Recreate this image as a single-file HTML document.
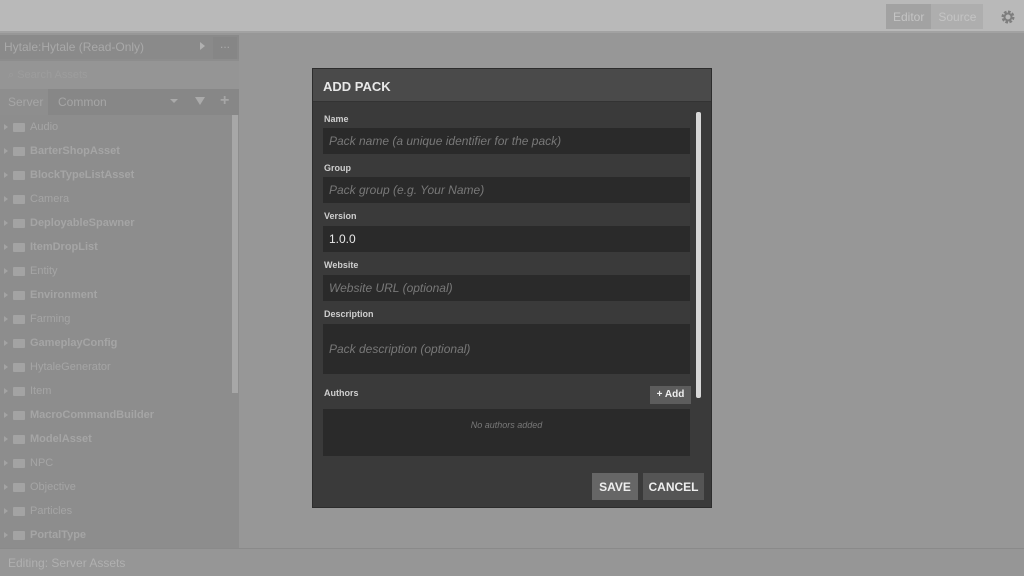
<!DOCTYPE html>
<html><head><style>
*{margin:0;padding:0;box-sizing:border-box}
body{width:1024px;height:576px;overflow:hidden;background:#979797;font-family:"Liberation Sans",sans-serif;position:relative}
.top{position:absolute;left:0;top:0;width:1024px;height:33px;background:#b9b9b9;border-bottom:2px solid #a2a2a2}
.tabs{position:absolute;left:886px;top:4px;height:25px;display:flex;background:#aeaeae}
.tabs div{padding:6px 7px;font-size:12px;color:#c4c4c4}
.tabs div:first-child{background:#a2a2a2}
.side{position:absolute;left:0;top:35px;width:239px;height:513px;background:#8d8d8d}
.hdr{height:24px;background:#8a8a8a;color:#a9a9a9;font-size:12px;padding:5px 4px}
.search{height:28px;background:#959595;margin-top:2px}
.tabrow{height:26px;background:#878787;position:relative;font-size:12px;color:#a6a6a6}
.item{position:absolute;left:0;font-size:11px;color:#a5a5a5;display:flex;align-items:center}
.item b{font-weight:bold}
.fold{display:inline-block;width:12px;height:9px;background:#a3a3a3;margin:0 5px 0 5px;border-radius:1px}
.arr{display:inline-block;width:0;height:0;border-left:4px solid #a3a3a3;border-top:3px solid transparent;border-bottom:3px solid transparent;margin-left:4px}
.bot{position:absolute;left:0;top:548px;width:1024px;height:28px;background:#969696;border-top:1px solid #8a8a8a;font-size:12px;color:#b0b0b0;padding:7px 8px}
.dlg{position:absolute;left:312px;top:68px;width:400px;height:440px;background:#3a3a3a;border:1px solid #2c2c2c}
.dh{height:33px;background:#4a4a4a;color:#e8e8e8;font-weight:bold;font-size:13px;padding:10px 10px;border-bottom:1px solid #333}
.lbl{position:absolute;left:11px;font-size:9px;font-weight:bold;color:#cfcfcf}
.inp{position:absolute;left:10px;width:367px;height:26px;background:#2a2a2a;font-size:12px;font-style:italic;color:#787878;padding:6px 6px}
.btn{position:absolute;background:#5c5c5c;color:#eee;font-weight:bold;font-size:12px;text-align:center}
</style></head><body>
<div class="top">
<div class="tabs"><div>Editor</div><div>Source</div></div>
<svg style="position:absolute;left:1000px;top:9px" width="16" height="16" viewBox="0 0 16 16"><circle cx="8" cy="8" r="5" fill="none" stroke="#7e7e7e" stroke-width="3" stroke-dasharray="2.5 1.4"/><circle cx="8" cy="8" r="3.5" fill="none" stroke="#7e7e7e" stroke-width="2"/></svg>
</div>
<div class="side">
<div class="hdr">Hytale:Hytale (Read-Only)<span style="position:absolute;left:200px;top:7px;border-left:5px solid #b0b0b0;border-top:4px solid transparent;border-bottom:4px solid transparent"></span><span style="position:absolute;left:213px;top:2px;width:24px;height:22px;background:#868686;text-align:center;color:#aaa">...</span></div>
<div class="search"><span style="font-size:11px;color:#9d9d9d;padding:8px 8px;display:block">⌕ Search Assets</span></div>
<div class="tabrow"><span style="position:absolute;left:0;top:0;width:48px;height:26px;background:#8e8e8e;padding:6px 8px">Server</span><span style="position:absolute;left:58px;top:6px">Common</span><span style="position:absolute;left:170px;top:10px;border-top:4px solid #aaa;border-left:4px solid transparent;border-right:4px solid transparent"></span><span style="position:absolute;left:195px;top:8px;border-top:8px solid #aaa;border-left:5px solid transparent;border-right:5px solid transparent"></span><span style="position:absolute;left:220px;top:3px;font-size:16px;font-weight:bold">+</span></div>
<div style="position:absolute;left:232px;top:80px;width:6px;height:278px;background:#a7a7a7"></div>
</div>
<div style="position:absolute;left:0;top:0">
<div class="item" style="top:121px"><span class="arr"></span><span class="fold"></span>Audio</div>
<div class="item" style="top:145px"><span class="arr"></span><span class="fold"></span><b>BarterShopAsset</b></div>
<div class="item" style="top:169px"><span class="arr"></span><span class="fold"></span><b>BlockTypeListAsset</b></div>
<div class="item" style="top:193px"><span class="arr"></span><span class="fold"></span>Camera</div>
<div class="item" style="top:217px"><span class="arr"></span><span class="fold"></span><b>DeployableSpawner</b></div>
<div class="item" style="top:241px"><span class="arr"></span><span class="fold"></span><b>ItemDropList</b></div>
<div class="item" style="top:265px"><span class="arr"></span><span class="fold"></span>Entity</div>
<div class="item" style="top:289px"><span class="arr"></span><span class="fold"></span><b>Environment</b></div>
<div class="item" style="top:313px"><span class="arr"></span><span class="fold"></span>Farming</div>
<div class="item" style="top:337px"><span class="arr"></span><span class="fold"></span><b>GameplayConfig</b></div>
<div class="item" style="top:361px"><span class="arr"></span><span class="fold"></span>HytaleGenerator</div>
<div class="item" style="top:385px"><span class="arr"></span><span class="fold"></span>Item</div>
<div class="item" style="top:409px"><span class="arr"></span><span class="fold"></span><b>MacroCommandBuilder</b></div>
<div class="item" style="top:433px"><span class="arr"></span><span class="fold"></span><b>ModelAsset</b></div>
<div class="item" style="top:457px"><span class="arr"></span><span class="fold"></span>NPC</div>
<div class="item" style="top:481px"><span class="arr"></span><span class="fold"></span>Objective</div>
<div class="item" style="top:505px"><span class="arr"></span><span class="fold"></span>Particles</div>
<div class="item" style="top:529px"><span class="arr"></span><span class="fold"></span><b>PortalType</b></div>
</div>
<div class="bot">Editing: Server Assets</div>
<div class="dlg">
<div class="dh">ADD PACK</div>
<div style="position:absolute;left:383px;top:43px;width:5px;height:286px;background:#d8d8d8;border-radius:2px"></div>
<div class="lbl" style="top:45px">Name</div>
<div class="inp" style="top:59px">Pack name (a unique identifier for the pack)</div>
<div class="lbl" style="top:94px">Group</div>
<div class="inp" style="top:108px">Pack group (e.g. Your Name)</div>
<div class="lbl" style="top:142px">Version</div>
<div class="inp" style="top:157px;font-style:normal;color:#e8e8e8">1.0.0</div>
<div class="lbl" style="top:191px">Website</div>
<div class="inp" style="top:206px">Website URL (optional)</div>
<div class="lbl" style="top:240px">Description</div>
<div class="inp" style="top:255px;height:50px;padding-top:18px">Pack description (optional)</div>
<div class="lbl" style="top:319px">Authors</div>
<div class="btn" style="left:337px;top:317px;width:41px;height:18px;font-size:10px;padding-top:3px">+ Add</div>
<div class="inp" style="top:340px;height:47px;font-size:9px;text-align:center;padding-top:11px">No authors added</div>
<div class="btn" style="left:279px;top:404px;width:46px;height:27px;padding-top:7px;background:#666">SAVE</div>
<div class="btn" style="left:330px;top:404px;width:61px;height:27px;padding-top:7px;background:#555">CANCEL</div>
</div>
</body></html>
